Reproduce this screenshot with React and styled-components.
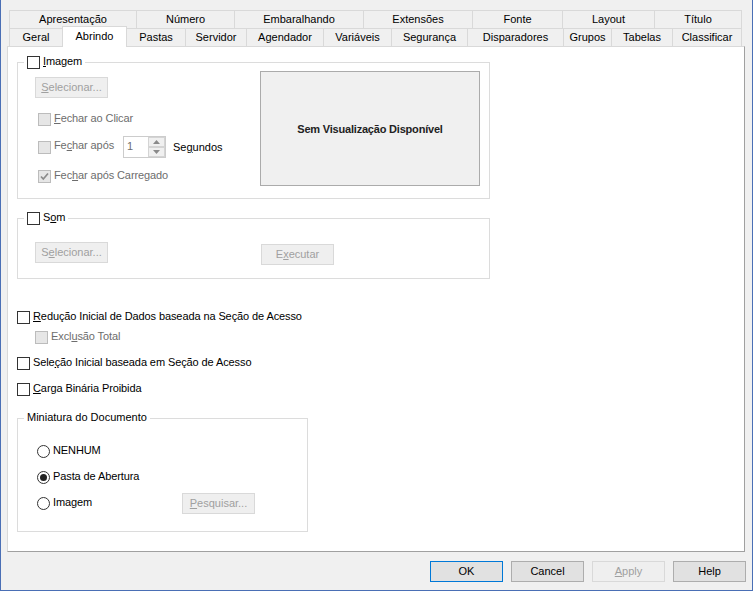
import React from "react";
import styled, { createGlobalStyle } from "styled-components";

const GlobalStyle = createGlobalStyle`
  html, body {
    margin: 0;
    padding: 0;
    background: #f0f0f0;
  }
  body {
    font-family: "Liberation Sans", Arial, sans-serif;
    font-size: 11px;
    color: #000;
  }
  * {
    box-sizing: border-box;
  }
`;

const Window = styled.div`
  width: 753px;
  height: 591px;
  border: 1px solid #4a6fb5;
  border-top: none;
  background: #f0f0f0;
  display: flex;
  flex-direction: column;
`;

const TabStrip = styled.div`
  padding: 10px 0 0 8px;
  display: flex;
  flex-direction: column;
`;

const TabRow = styled.div`
  display: flex;
  align-items: flex-end;
  height: 18px;
`;

const Tab = styled.div`
  flex: none;
  width: ${(p) => p.$w}px;
  height: ${(p) => (p.$active ? 21 : 18)}px;
  margin-bottom: ${(p) => (p.$active ? -1 : 0)}px;
  margin-right: -1px;
  border: 1px solid #d9d9d9;
  border-bottom: none;
  background: ${(p) => (p.$active ? "#fff" : "#f0f0f0")};
  display: flex;
  align-items: center;
  justify-content: center;
  padding-bottom: ${(p) => (p.$active ? 3 : 1)}px;
  position: relative;
  z-index: ${(p) => (p.$active ? 2 : 1)};
  white-space: nowrap;
`;

const Panel = styled.div`
  margin: 0 7px 0 6px;
  height: 506px;
  background: #fff;
  border: 1px solid;
  border-color: #d9d9d9 #a0a0a0 #a0a0a0 #d9d9d9;
  padding: 8px 0 0 9px;
`;

const Group = styled.fieldset`
  margin: ${(p) => p.$mt || 0}px 0 0;
  width: ${(p) => p.$w}px;
  padding: 0;
  border: 1px solid #dcdcdc;
  min-width: 0;
`;

const Legend = styled.legend`
  margin-left: 6px;
  padding: 0 3px;
  height: 15px;
  line-height: 13px;
`;

const LegendItem = styled.span`
  display: flex;
  align-items: center;
  height: 15px;
`;

const GroupBody = styled.div`
  padding: ${(p) => p.$pad};
  display: flex;
  flex-direction: ${(p) => (p.$col ? "column" : "row")};
  align-items: flex-start;
`;

const Column = styled.div`
  width: ${(p) => p.$w}px;
  flex: none;
  display: flex;
  flex-direction: column;
  align-items: flex-start;
`;

const Box = styled.span`
  width: 13px;
  height: 13px;
  flex: none;
  border: 1px solid ${(p) => (p.$disabled ? "#bcbcbc" : "#333")};
  background: ${(p) => (p.$disabled ? "#e6e6e6" : "#fff")};
  display: inline-flex;
  align-items: center;
  justify-content: center;
`;

const Text = styled.span`
  margin-left: 3px;
  padding-bottom: 3px;
  line-height: 13px;
  letter-spacing: -0.1px;
  white-space: nowrap;
  color: ${(p) => (p.$disabled ? "#6d6d6d" : "#000")};
  & u {
    text-underline-offset: 1px;
  }
`;

const CheckUnit = styled.span`
  display: flex;
  align-items: center;
  width: ${(p) => (p.$w ? `${p.$w}px` : "auto")};
  flex: none;
`;

const Row = styled.div`
  display: flex;
  align-items: center;
  height: ${(p) => p.$h || 13}px;
  margin-top: ${(p) => p.$mt || 0}px;
  margin-left: ${(p) => p.$ml || 0}px;
`;

const Button = styled.button`
  flex: none;
  width: 73px;
  height: 21px;
  margin-top: ${(p) => p.$mt || 0}px;
  padding: 0 0 1px;
  font: inherit;
  color: #000;
  background: #e1e1e1;
  border: 1px solid ${(p) => (p.$primary ? "#0078d7" : "#adadad")};
  &:disabled {
    color: #a0a0a0;
    background: #efefef;
    border-color: #d9d9d9;
  }
  & u {
    text-underline-offset: 1px;
  }
`;

const Preview = styled.div`
  flex: none;
  width: 220px;
  height: 115px;
  margin-top: 1px;
  border: 1px solid #ababab;
  background: #f0f0f0;
  display: flex;
  align-items: center;
  justify-content: center;
  font-weight: bold;
  letter-spacing: -0.2px;
  color: #222;
`;

const Spin = styled.div`
  flex: none;
  display: flex;
  width: 43px;
  height: 22px;
  border: 1px solid #cccccc;
  background: #fff;
`;

const SpinValue = styled.span`
  flex: 1;
  padding: 3px 0 0 3px;
  color: #6d6d6d;
`;

const SpinButtons = styled.div`
  width: 17px;
  display: flex;
  flex-direction: column;
`;

const SpinButton = styled.span`
  flex: 1;
  border: 1px solid #d4d4d4;
  background: #f0f0f0;
  display: flex;
  align-items: center;
  justify-content: center;
`;

const Seconds = styled.span`
  margin-left: 7px;
  & u {
    text-underline-offset: 1px;
  }
`;

const RadioDot = styled.span`
  width: 13px;
  height: 13px;
  flex: none;
  border-radius: 50%;
  border: 1px solid #333;
  background: #fff;
  display: inline-flex;
  align-items: center;
  justify-content: center;
  &::after {
    content: "";
    width: 7px;
    height: 7px;
    border-radius: 50%;
    background: #222;
    display: ${(p) => (p.$on ? "block" : "none")};
  }
`;

const Footer = styled.div`
  display: flex;
  justify-content: flex-end;
  gap: 8px;
  padding: 9px 6px 0 0;
`;

const Arrow = ({ up }) => (
  <svg width="7" height="4" viewBox="0 0 7 4">
    <path d={up ? "M0 4 L3.5 0 L7 4 Z" : "M0 0 L3.5 4 L7 0 Z"} fill="#8a8a8a" />
  </svg>
);

const CheckBox = ({ label, disabled, checked, w }) => (
  <CheckUnit $w={w}>
    <Box $disabled={disabled}>
      {checked && (
        <svg width="11" height="11" viewBox="0 0 11 11">
          <path d="M2 5.5 L4.3 8 L9 2.5" stroke="#8a8a8a" strokeWidth="1.7" fill="none" />
        </svg>
      )}
    </Box>
    <Text $disabled={disabled}>{label}</Text>
  </CheckUnit>
);

const Radio = ({ label, on, w }) => (
  <CheckUnit $w={w}>
    <RadioDot $on={on} />
    <Text>{label}</Text>
  </CheckUnit>
);

const backTabs = [
  ["Apresentação", 128],
  ["Número", 99],
  ["Embaralhando", 130],
  ["Extensões", 110],
  ["Fonte", 91],
  ["Layout", 93],
  ["Título", 88],
];

const frontTabs = [
  ["Geral", 54],
  ["Abrindo", 65],
  ["Pastas", 60],
  ["Servidor", 62],
  ["Agendador", 78],
  ["Variáveis", 69],
  ["Segurança", 77],
  ["Disparadores", 97],
  ["Grupos", 49],
  ["Tabelas", 62],
  ["Classificar", 70],
];

export default function App() {
  return (
    <>
      <GlobalStyle />
      <Window>
        <TabStrip>
          <TabRow>
            {backTabs.map(([name, w]) => (
              <Tab key={name} $w={w}>
                {name}
              </Tab>
            ))}
          </TabRow>
          <TabRow>
            {frontTabs.map(([name, w]) => (
              <Tab key={name} $w={w} $active={name === "Abrindo"}>
                {name}
              </Tab>
            ))}
          </TabRow>
        </TabStrip>

        <Panel>
          <Group $w={473}>
            <Legend>
              <LegendItem>
                <Box />
                <Text>
                  <u>I</u>magem
                </Text>
              </LegendItem>
            </Legend>
            <GroupBody $pad="0 9px 12px 17px">
              <Column $w={225}>
                <Button disabled $mt={7}>
                  <u>S</u>elecionar...
                </Button>
                <Row $mt={15} $ml={3}>
                  <CheckBox
                    disabled
                    label={
                      <>
                        <u>F</u>echar ao Clicar
                      </>
                    }
                  />
                </Row>
                <Row $mt={10} $ml={3} $h={22}>
                  <CheckBox
                    disabled
                    w={85}
                    label={
                      <>
                        Fe<u>c</u>har após
                      </>
                    }
                  />
                  <Spin>
                    <SpinValue>1</SpinValue>
                    <SpinButtons>
                      <SpinButton>
                        <Arrow up />
                      </SpinButton>
                      <SpinButton>
                        <Arrow />
                      </SpinButton>
                    </SpinButtons>
                  </Spin>
                  <Seconds>
                    Se<u>g</u>undos
                  </Seconds>
                </Row>
                <Row $mt={12} $ml={3}>
                  <CheckBox
                    disabled
                    checked
                    label={
                      <>
                        Fec<u>h</u>ar após Carregado
                      </>
                    }
                  />
                </Row>
              </Column>
              <Preview>Sem Visualização Disponível</Preview>
            </GroupBody>
          </Group>

          <Group $w={473} $mt={12}>
            <Legend>
              <LegendItem>
                <Box />
                <Text>
                  S<u>o</u>m
                </Text>
              </LegendItem>
            </Legend>
            <GroupBody $pad="16px 9px 13px 17px">
              <Column $w={226}>
                <Button disabled>
                  S<u>e</u>lecionar...
                </Button>
              </Column>
              <Button disabled $mt={2}>
                E<u>x</u>ecutar
              </Button>
            </GroupBody>
          </Group>

          <Row $mt={32}>
            <CheckBox
              label={
                <>
                  <u>R</u>edução Inicial de Dados baseada na Seção de Acesso
                </>
              }
            />
          </Row>
          <Row $mt={7} $ml={18}>
            <CheckBox
              disabled
              label={
                <>
                  Excl<u>u</u>são Total
                </>
              }
            />
          </Row>
          <Row $mt={13}>
            <CheckBox
              label={
                <>
                  Sele<u>ç</u>ão Inicial baseada em Seção de Acesso
                </>
              }
            />
          </Row>
          <Row $mt={13}>
            <CheckBox
              label={
                <>
                  <u>C</u>arga Binária Proibida
                </>
              }
            />
          </Row>

          <Group $w={291} $mt={15}>
            <Legend>Miniatura do Documento</Legend>
            <GroupBody $col $pad="15px 0 17px 19px">
              <Row $h={21}>
                <Radio label="NENHUM" />
              </Row>
              <Row $h={21} $mt={5}>
                <Radio label="Pasta de Abertura" on />
              </Row>
              <Row $h={21} $mt={5}>
                <Radio label="Imagem" w={145} />
                <Button disabled>
                  <u>P</u>esquisar...
                </Button>
              </Row>
            </GroupBody>
          </Group>
        </Panel>

        <Footer>
          <Button $primary>OK</Button>
          <Button>Cancel</Button>
          <Button disabled>
            <u>A</u>pply
          </Button>
          <Button>Help</Button>
        </Footer>
      </Window>
    </>
  );
}
